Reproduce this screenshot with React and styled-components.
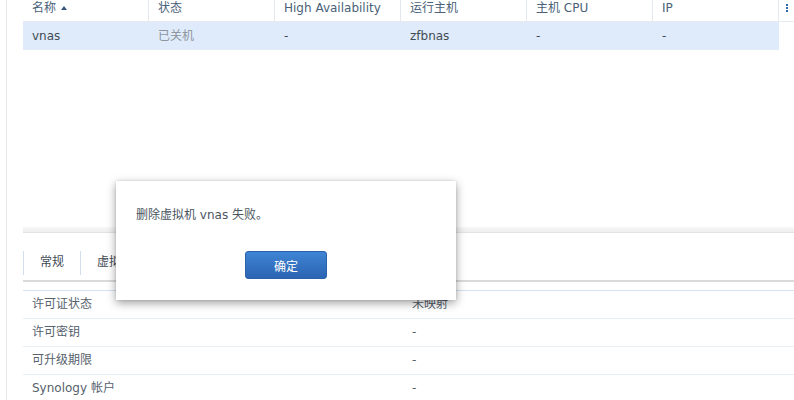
import React from 'react'
import styled, { createGlobalStyle } from 'styled-components'

const FONT = `"DejaVu Sans", Verdana, "Noto Sans CJK SC", sans-serif`

const GlobalStyle = createGlobalStyle`
  html, body {
    margin: 0;
    padding: 0;
    background: #ffffff;
  }
  body {
    font-family: ${FONT};
    font-size: 12px;
  }
`

const Page = styled.div`
  position: relative;
  width: 794px;
  height: 400px;
  overflow: hidden;
  background: #ffffff;
`

const Pane = styled.div`
  margin-left: 6px;
  height: 100%;
  border-left: 1px solid #e6e8ea;
`

const Grid = styled.div`
  height: 227px;
  padding-left: 16px;
`

const HeaderRow = styled.div`
  display: flex;
  height: 21px;
  border-bottom: 1px solid #e6ebf0;
`

const HeaderCell = styled.div`
  box-sizing: border-box;
  width: ${(p) => p.$width || 126}px;
  border-right: 1px solid #e3e9ef;
  padding-left: 9px;
  line-height: 16px;
  color: #4a5f78;
  display: flex;
  align-items: flex-start;
  gap: 5px;
  white-space: nowrap;
`

const SortUp = styled.span`
  margin-top: 6px;
  width: 0;
  height: 0;
  border-left: 3px solid transparent;
  border-right: 3px solid transparent;
  border-bottom: 4px solid #34557a;
`

const MenuCell = styled.div`
  flex: 1;
  display: flex;
  flex-direction: column;
  align-items: center;
  padding-top: 4px;
  gap: 1px;
`

const Dot = styled.span`
  width: 2px;
  height: 2px;
  background: #2d6ab0;
`

const DataRow = styled.div`
  display: flex;
  width: 756px;
  height: 28px;
  background: #dfebfa;
`

const DataCell = styled.div`
  width: 126px;
  padding-left: 9px;
  line-height: 28px;
  color: ${(p) => (p.$muted ? '#8d959d' : '#414b55')};
`

const Splitter = styled.div`
  margin-left: 16px;
  height: 5px;
  background: linear-gradient(#f7f7f7, #eeeeee);
  border-bottom: 1px solid #e3e3e3;
`

const TabBar = styled.div`
  box-sizing: border-box;
  height: 49px;
  margin-left: 16px;
  border-bottom: 2px solid #dadada;
  display: flex;
  align-items: flex-end;
  padding-bottom: 5px;
`

const Tab = styled.div`
  height: 24px;
  padding: 0 16px;
  border-left: 1px solid #d2dee9;
  line-height: 23px;
  color: #3f4a55;
  &:last-child {
    border-right: 1px solid #d2dee9;
  }
`

const InfoTable = styled.div`
  margin-top: 8px;
  margin-left: 16px;
  border-top: 1px solid #d4e2f0;
`

const InfoRow = styled.div`
  display: flex;
  height: 27px;
  border-bottom: 1px solid #e8edf2;
  line-height: 27px;
  color: #56616c;
`

const InfoLabel = styled.div`
  width: 380px;
  padding-left: 9px;
`

const InfoValue = styled.div`
  flex: 1;
`

const Dialog = styled.div`
  position: absolute;
  left: 116px;
  top: 181px;
  width: 340px;
  height: 119px;
  box-sizing: border-box;
  background: #ffffff;
  box-shadow: 0 3px 9px rgba(0, 0, 0, 0.38), 0 0 2px rgba(0, 0, 0, 0.12);
  padding: 26px 20px 21px;
  display: flex;
  flex-direction: column;
  justify-content: space-between;
`

const Message = styled.div`
  line-height: 16px;
  color: #4a5560;
`

const Actions = styled.div`
  display: flex;
  justify-content: center;
`

const PrimaryButton = styled.button`
  width: 82px;
  height: 28px;
  border: 1px solid #2a61a8;
  border-radius: 3px;
  background: linear-gradient(#3f84d4, #2b64b2);
  color: #ffffff;
  font-family: ${FONT};
  font-size: 12px;
  padding: 0;
`

const columns = ['状态', 'High Availability', '运行主机', '主机 CPU', 'IP']

const info = [
  ['许可证状态', '未映射'],
  ['许可密钥', '-'],
  ['可升级期限', '-'],
  ['Synology 帐户', '-'],
]

export default function App() {
  return (
    <Page>
      <GlobalStyle />
      <Pane>
        <Grid>
          <HeaderRow>
            <HeaderCell>
              名称
              <SortUp />
            </HeaderCell>
            {columns.map((c) => (
              <HeaderCell key={c}>{c}</HeaderCell>
            ))}
            <MenuCell>
              <Dot />
              <Dot />
              <Dot />
            </MenuCell>
          </HeaderRow>
          <DataRow>
            <DataCell>vnas</DataCell>
            <DataCell $muted>已关机</DataCell>
            <DataCell>-</DataCell>
            <DataCell>zfbnas</DataCell>
            <DataCell>-</DataCell>
            <DataCell>-</DataCell>
          </DataRow>
        </Grid>
        <Splitter />
        <TabBar>
          <Tab>常规</Tab>
          <Tab>虚拟机</Tab>
          <Tab>许可证</Tab>
        </TabBar>
        <InfoTable>
          {info.map(([label, value]) => (
            <InfoRow key={label}>
              <InfoLabel>{label}</InfoLabel>
              <InfoValue>{value}</InfoValue>
            </InfoRow>
          ))}
        </InfoTable>
      </Pane>
      <Dialog>
        <Message>删除虚拟机 vnas 失败。</Message>
        <Actions>
          <PrimaryButton>确定</PrimaryButton>
        </Actions>
      </Dialog>
    </Page>
  )
}
